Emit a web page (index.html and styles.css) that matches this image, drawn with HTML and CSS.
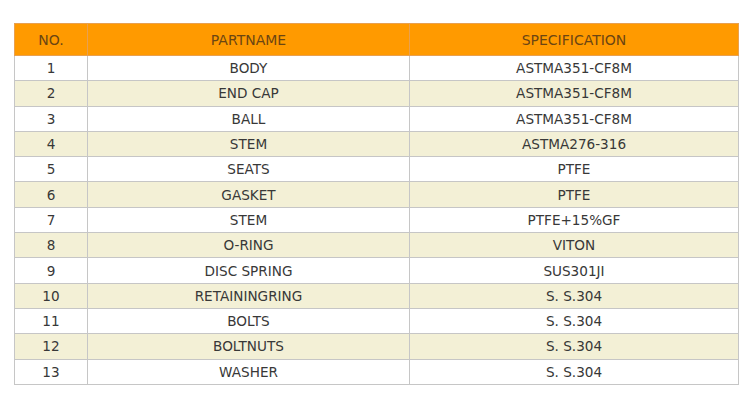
FILE: index.html
```html
<!DOCTYPE html>
<html>
<head>
<meta charset="utf-8">
<link rel="stylesheet" href="styles.css">
</head>
<body>
<div class="wrap">
<table class="parts">
  <thead>
    <tr><th class="c-no">NO.</th><th class="c-name">PARTNAME</th><th class="c-spec">SPECIFICATION</th></tr>
  </thead>
  <tbody>
    <tr><td>1</td><td>BODY</td><td>ASTMA351-CF8M</td></tr>
    <tr><td>2</td><td>END CAP</td><td>ASTMA351-CF8M</td></tr>
    <tr><td>3</td><td>BALL</td><td>ASTMA351-CF8M</td></tr>
    <tr><td>4</td><td>STEM</td><td>ASTMA276-316</td></tr>
    <tr><td>5</td><td>SEATS</td><td>PTFE</td></tr>
    <tr><td>6</td><td>GASKET</td><td>PTFE</td></tr>
    <tr><td>7</td><td>STEM</td><td>PTFE+15%GF</td></tr>
    <tr><td>8</td><td>O-RING</td><td>VITON</td></tr>
    <tr><td>9</td><td>DISC SPRING</td><td>SUS301JI</td></tr>
    <tr><td>10</td><td>RETAININGRING</td><td>S. S.304</td></tr>
    <tr><td>11</td><td>BOLTS</td><td>S. S.304</td></tr>
    <tr><td>12</td><td>BOLTNUTS</td><td>S. S.304</td></tr>
    <tr><td>13</td><td>WASHER</td><td>S. S.304</td></tr>
  </tbody>
</table>
</div>
</body>
</html>
```
FILE: styles.css
```css
html, body {
  margin: 0;
  padding: 0;
  background: #ffffff;
}
.wrap {
  padding: 23px 0 0 14px;
}
.parts {
  border-collapse: collapse;
  width: 725px;
  font-family: "DejaVu Sans", Verdana, sans-serif;
  font-size: 13.6px;
  color: #383838;
  table-layout: fixed;
}
.parts th, .parts td {
  border: 1px solid #c6c6c6;
  text-align: center;
  padding: 0;
  font-weight: normal;
  line-height: 16px;
}
.parts th {
  background: #ff9a00;
  color: #6b4513;
  height: 31px;
  border-color: #e8a050;
  font-size: 14px;
}
.parts td {
  height: 24.3px;
}
.c-no { width: 72px; }
.c-name { width: 321px; }
.parts tbody tr:nth-child(even) td {
  background: #f3f0d6;
}
```
